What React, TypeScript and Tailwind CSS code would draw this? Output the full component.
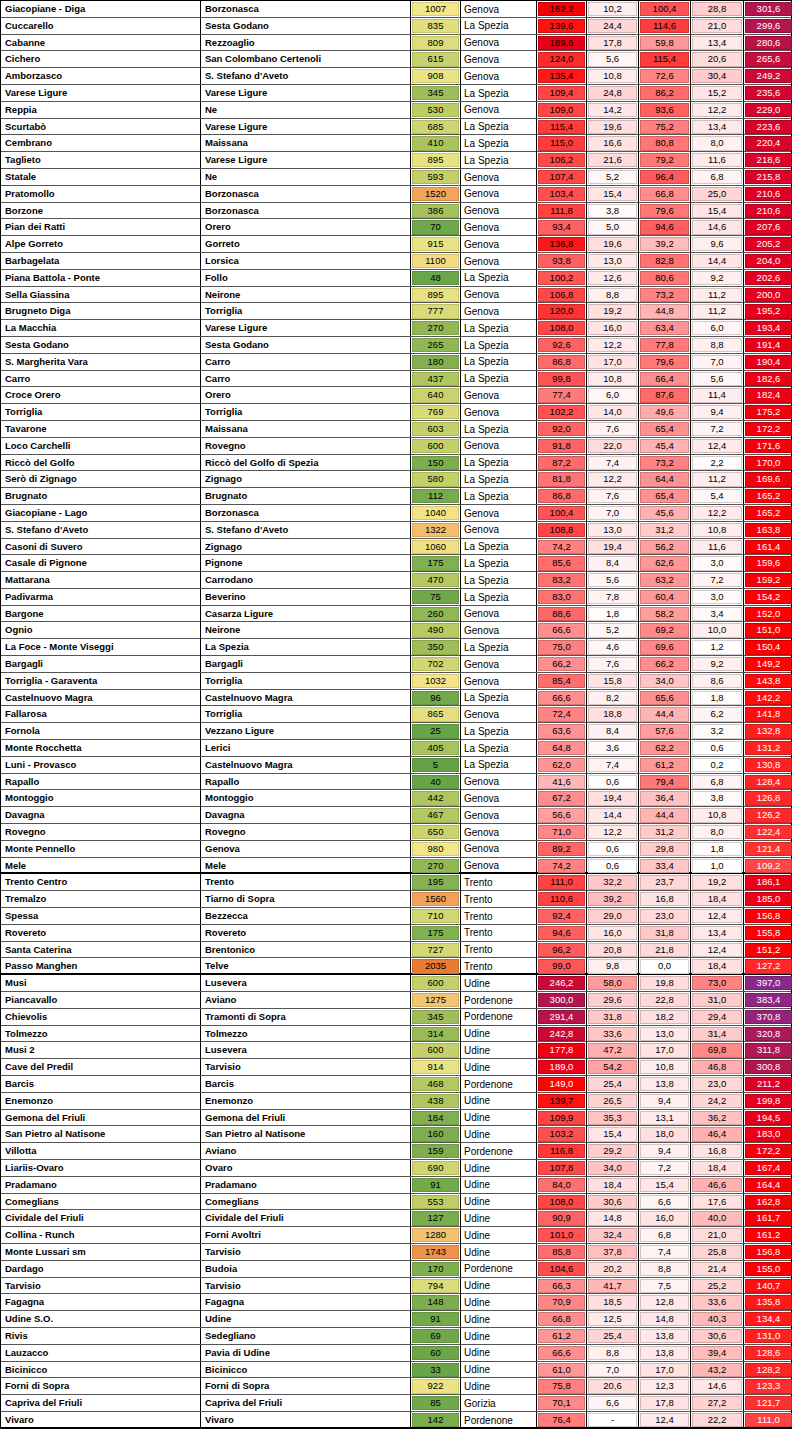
import React from 'react'

type Row = [string, string, number, string, string, string, string, string, string]

// stazione, comune, quota, provincia, 4 giorni di pioggia, totale
const liguria: Row[] = [
  ['Giacopiane - Diga', 'Borzonasca', 1007, 'Genova', '162,2', '10,2', '100,4', '28,8', '301,6'],
  ['Cuccarello', 'Sesta Godano', 835, 'La Spezia', '139,6', '24,4', '114,6', '21,0', '299,6'],
  ['Cabanne', 'Rezzoaglio', 809, 'Genova', '189,6', '17,8', '59,8', '13,4', '280,6'],
  ['Cichero', 'San Colombano Certenoli', 615, 'Genova', '124,0', '5,6', '115,4', '20,6', '265,6'],
  ['Amborzasco', "S. Stefano d'Aveto", 908, 'Genova', '135,4', '10,8', '72,6', '30,4', '249,2'],
  ['Varese Ligure', 'Varese Ligure', 345, 'La Spezia', '109,4', '24,8', '86,2', '15,2', '235,6'],
  ['Reppia', 'Ne', 530, 'Genova', '109,0', '14,2', '93,6', '12,2', '229,0'],
  ['Scurtabò', 'Varese Ligure', 685, 'La Spezia', '115,4', '19,6', '75,2', '13,4', '223,6'],
  ['Cembrano', 'Maissana', 410, 'La Spezia', '115,0', '16,6', '80,8', '8,0', '220,4'],
  ['Taglieto', 'Varese Ligure', 895, 'La Spezia', '106,2', '21,6', '79,2', '11,6', '218,6'],
  ['Statale', 'Ne', 593, 'Genova', '107,4', '5,2', '96,4', '6,8', '215,8'],
  ['Pratomollo', 'Borzonasca', 1520, 'Genova', '103,4', '15,4', '66,8', '25,0', '210,6'],
  ['Borzone', 'Borzonasca', 386, 'Genova', '111,8', '3,8', '79,6', '15,4', '210,6'],
  ['Pian dei Ratti', 'Orero', 70, 'Genova', '93,4', '5,0', '94,6', '14,6', '207,6'],
  ['Alpe Gorreto', 'Gorreto', 915, 'Genova', '136,8', '19,6', '39,2', '9,6', '205,2'],
  ['Barbagelata', 'Lorsica', 1100, 'Genova', '93,8', '13,0', '82,8', '14,4', '204,0'],
  ['Piana Battola - Ponte', 'Follo', 48, 'La Spezia', '100,2', '12,6', '80,6', '9,2', '202,6'],
  ['Sella Giassina', 'Neirone', 895, 'Genova', '106,8', '8,8', '73,2', '11,2', '200,0'],
  ['Brugneto Diga', 'Torriglia', 777, 'Genova', '120,0', '19,2', '44,8', '11,2', '195,2'],
  ['La Macchia', 'Varese Ligure', 270, 'La Spezia', '108,0', '16,0', '63,4', '6,0', '193,4'],
  ['Sesta Godano', 'Sesta Godano', 265, 'La Spezia', '92,6', '12,2', '77,8', '8,8', '191,4'],
  ['S. Margherita Vara', 'Carro', 180, 'La Spezia', '86,8', '17,0', '79,6', '7,0', '190,4'],
  ['Carro', 'Carro', 437, 'La Spezia', '99,8', '10,8', '66,4', '5,6', '182,6'],
  ['Croce Orero', 'Orero', 640, 'Genova', '77,4', '6,0', '87,6', '11,4', '182,4'],
  ['Torriglia', 'Torriglia', 769, 'Genova', '102,2', '14,0', '49,6', '9,4', '175,2'],
  ['Tavarone', 'Maissana', 603, 'La Spezia', '92,0', '7,6', '65,4', '7,2', '172,2'],
  ['Loco Carchelli', 'Rovegno', 600, 'Genova', '91,8', '22,0', '45,4', '12,4', '171,6'],
  ['Riccò del Golfo', 'Riccò del Golfo di Spezia', 150, 'La Spezia', '87,2', '7,4', '73,2', '2,2', '170,0'],
  ['Serò di Zignago', 'Zignago', 580, 'La Spezia', '81,8', '12,2', '64,4', '11,2', '169,6'],
  ['Brugnato', 'Brugnato', 112, 'La Spezia', '86,8', '7,6', '65,4', '5,4', '165,2'],
  ['Giacopiane - Lago', 'Borzonasca', 1040, 'Genova', '100,4', '7,0', '45,6', '12,2', '165,2'],
  ["S. Stefano d'Aveto", "S. Stefano d'Aveto", 1322, 'Genova', '108,8', '13,0', '31,2', '10,8', '163,8'],
  ['Casoni di Suvero', 'Zignago', 1060, 'La Spezia', '74,2', '19,4', '56,2', '11,6', '161,4'],
  ['Casale di Pignone', 'Pignone', 175, 'La Spezia', '85,6', '8,4', '62,6', '3,0', '159,6'],
  ['Mattarana', 'Carrodano', 470, 'La Spezia', '83,2', '5,6', '63,2', '7,2', '159,2'],
  ['Padivarma', 'Beverino', 75, 'La Spezia', '83,0', '7,8', '60,4', '3,0', '154,2'],
  ['Bargone', 'Casarza Ligure', 260, 'Genova', '88,6', '1,8', '58,2', '3,4', '152,0'],
  ['Ognio', 'Neirone', 490, 'Genova', '66,6', '5,2', '69,2', '10,0', '151,0'],
  ['La Foce - Monte Viseggi', 'La Spezia', 350, 'La Spezia', '75,0', '4,6', '69,6', '1,2', '150,4'],
  ['Bargagli', 'Bargagli', 702, 'Genova', '66,2', '7,6', '66,2', '9,2', '149,2'],
  ['Torriglia - Garaventa', 'Torriglia', 1032, 'Genova', '85,4', '15,8', '34,0', '8,6', '143,8'],
  ['Castelnuovo Magra', 'Castelnuovo Magra', 96, 'La Spezia', '66,6', '8,2', '65,6', '1,8', '142,2'],
  ['Fallarosa', 'Torriglia', 865, 'Genova', '72,4', '18,8', '44,4', '6,2', '141,8'],
  ['Fornola', 'Vezzano Ligure', 25, 'La Spezia', '63,6', '8,4', '57,6', '3,2', '132,8'],
  ['Monte Rocchetta', 'Lerici', 405, 'La Spezia', '64,8', '3,6', '62,2', '0,6', '131,2'],
  ['Luni - Provasco', 'Castelnuovo Magra', 5, 'La Spezia', '62,0', '7,4', '61,2', '0,2', '130,8'],
  ['Rapallo', 'Rapallo', 40, 'Genova', '41,6', '0,6', '79,4', '6,8', '128,4'],
  ['Montoggio', 'Montoggio', 442, 'Genova', '67,2', '19,4', '36,4', '3,8', '126,8'],
  ['Davagna', 'Davagna', 467, 'Genova', '56,6', '14,4', '44,4', '10,8', '126,2'],
  ['Rovegno', 'Rovegno', 650, 'Genova', '71,0', '12,2', '31,2', '8,0', '122,4'],
  ['Monte Pennello', 'Genova', 980, 'Genova', '89,2', '0,6', '29,8', '1,8', '121,4'],
  ['Mele', 'Mele', 270, 'Genova', '74,2', '0,6', '33,4', '1,0', '109,2'],
]

const trentino: Row[] = [
  ['Trento Centro', 'Trento', 195, 'Trento', '111,0', '32,2', '23,7', '19,2', '186,1'],
  ['Tremalzo', 'Tiarno di Sopra', 1560, 'Trento', '110,6', '39,2', '16,8', '18,4', '185,0'],
  ['Spessa', 'Bezzecca', 710, 'Trento', '92,4', '29,0', '23,0', '12,4', '156,8'],
  ['Rovereto', 'Rovereto', 175, 'Trento', '94,6', '16,0', '31,8', '13,4', '155,8'],
  ['Santa Caterina', 'Brentonico', 727, 'Trento', '96,2', '20,8', '21,8', '12,4', '151,2'],
  ['Passo Manghen', 'Telve', 2035, 'Trento', '99,0', '9,8', '0,0', '18,4', '127,2'],
]

const friuli: Row[] = [
  ['Musi', 'Lusevera', 600, 'Udine', '246,2', '58,0', '19,8', '73,0', '397,0'],
  ['Piancavallo', 'Aviano', 1275, 'Pordenone', '300,0', '29,6', '22,8', '31,0', '383,4'],
  ['Chievolis', 'Tramonti di Sopra', 345, 'Pordenone', '291,4', '31,8', '18,2', '29,4', '370,8'],
  ['Tolmezzo', 'Tolmezzo', 314, 'Udine', '242,8', '33,6', '13,0', '31,4', '320,8'],
  ['Musi 2', 'Lusevera', 600, 'Udine', '177,8', '47,2', '17,0', '69,8', '311,8'],
  ['Cave del Predil', 'Tarvisio', 914, 'Udine', '189,0', '54,2', '10,8', '46,8', '300,8'],
  ['Barcis', 'Barcis', 468, 'Pordenone', '149,0', '25,4', '13,8', '23,0', '211,2'],
  ['Enemonzo', 'Enemonzo', 438, 'Udine', '139,7', '26,5', '9,4', '24,2', '199,8'],
  ['Gemona del Friuli', 'Gemona del Friuli', 184, 'Udine', '109,9', '35,3', '13,1', '36,2', '194,5'],
  ['San Pietro al Natisone', 'San Pietro al Natisone', 160, 'Udine', '103,2', '15,4', '18,0', '46,4', '183,0'],
  ['Villotta', 'Aviano', 159, 'Pordenone', '116,8', '29,2', '9,4', '16,8', '172,2'],
  ['Liariis-Ovaro', 'Ovaro', 690, 'Udine', '107,8', '34,0', '7,2', '18,4', '167,4'],
  ['Pradamano', 'Pradamano', 91, 'Udine', '84,0', '18,4', '15,4', '46,6', '164,4'],
  ['Comeglians', 'Comeglians', 553, 'Udine', '108,0', '30,6', '6,6', '17,6', '162,8'],
  ['Cividale del Friuli', 'Cividale del Friuli', 127, 'Udine', '90,9', '14,8', '16,0', '40,0', '161,7'],
  ['Collina - Runch', 'Forni Avoltri', 1280, 'Udine', '101,0', '32,4', '6,8', '21,0', '161,2'],
  ['Monte Lussari sm', 'Tarvisio', 1743, 'Udine', '85,8', '37,8', '7,4', '25,8', '156,8'],
  ['Dardago', 'Budoia', 170, 'Pordenone', '104,6', '20,2', '8,8', '21,4', '155,0'],
  ['Tarvisio', 'Tarvisio', 794, 'Udine', '66,3', '41,7', '7,5', '25,2', '140,7'],
  ['Fagagna', 'Fagagna', 148, 'Udine', '70,9', '18,5', '12,8', '33,6', '135,8'],
  ['Udine S.O.', 'Udine', 91, 'Udine', '66,8', '12,5', '14,8', '40,3', '134,4'],
  ['Rivis', 'Sedegliano', 69, 'Udine', '61,2', '25,4', '13,8', '30,6', '131,0'],
  ['Lauzacco', 'Pavia di Udine', 60, 'Udine', '66,6', '8,8', '13,8', '39,4', '128,6'],
  ['Bicinicco', 'Bicinicco', 33, 'Udine', '61,0', '7,0', '17,0', '43,2', '128,2'],
  ['Forni di Sopra', 'Forni di Sopra', 922, 'Udine', '75,8', '20,6', '12,3', '14,6', '123,3'],
  ['Capriva del Friuli', 'Capriva del Friuli', 85, 'Gorizia', '70,1', '6,6', '17,8', '27,2', '121,7'],
  ['Vivaro', 'Vivaro', 142, 'Pordenone', '76,4', '-', '12,4', '22,2', '111,0'],
]

type Stop = [number, number, number, number]

const rainStops: Stop[] = [
  [0, 255, 255, 255],
  [150, 255, 0, 0],
  [210, 222, 0, 36],
  [300, 178, 22, 78],
  [400, 136, 42, 140],
]

const quotaStops: Stop[] = [
  [0, 99, 161, 70],
  [500, 184, 203, 98],
  [1000, 244, 232, 138],
  [1500, 242, 166, 92],
  [2035, 232, 123, 53],
]

function scale(stops: Stop[], v: number) {
  if (v <= stops[0][0]) return `rgb(${stops[0][1]},${stops[0][2]},${stops[0][3]})`
  for (let i = 1; i < stops.length; i++) {
    const a = stops[i - 1]
    const b = stops[i]
    if (v <= b[0]) {
      const t = (v - a[0]) / (b[0] - a[0])
      const c = [1, 2, 3].map((k) => Math.round(a[k] + (b[k] - a[k]) * t))
      return `rgb(${c[0]},${c[1]},${c[2]})`
    }
  }
  const l = stops[stops.length - 1]
  return `rgb(${l[1]},${l[2]},${l[3]})`
}

const num = (s: string) => (s === '-' ? 0 : parseFloat(s.replace(',', '.')))

function TableRow({ row, last, friul }: { row: Row; last: boolean; friul: boolean }) {
  const [stazione, comune, quota, prov, a, b, c, d, tot] = row
  const rain = [a, b, c, d]
  return (
    <div
      className={`grid h-[16.8px] grid-cols-[200px_210px_50px_76px_50px_52px_52px_53px_49px] ${
        last ? 'border-b-2 border-black' : 'border-b border-[#555]'
      }`}
    >
      <div className="flex items-center border-r border-black pl-[4px] text-[9.5px] font-bold">{stazione}</div>
      <div className="flex items-center border-r border-black pl-[4px] text-[9.5px] font-bold">{comune}</div>
      <div className="border-r border-black p-px">
        <div
          className="flex h-full items-center justify-center text-[9.5px] shadow-[inset_0_0_0_1px_rgba(0,0,0,0.12)]"
          style={{ backgroundColor: scale(quotaStops, quota) }}
        >
          {quota}
        </div>
      </div>
      <div className="flex items-center border-r border-black pl-[3px] text-[10px]">{prov}</div>
      {rain.map((v, i) => (
        <div key={i} className="border-r border-black p-px">
          <div
            className={`flex h-full items-center justify-center text-[9.5px] shadow-[inset_0_0_0_1px_rgba(0,0,0,0.18)] ${
              i === 0 && friul && num(v) >= 145 ? 'text-white' : 'text-black'
            }`}
            style={{ backgroundColor: scale(rainStops, num(v)) }}
          >
            {v}
          </div>
        </div>
      ))}
      <div className="p-px">
        <div
          className="flex h-full items-center justify-center text-[9.5px] text-white shadow-[inset_0_0_0_1px_rgba(0,0,0,0.18)]"
          style={{ backgroundColor: scale(rainStops, num(tot)) }}
        >
          {tot}
        </div>
      </div>
    </div>
  )
}

export default function App() {
  const sections = [
    { rows: liguria, friul: false },
    { rows: trentino, friul: false },
    { rows: friuli, friul: true },
  ]
  return (
    <div className="min-h-[1430px] w-[792px] bg-white font-['Liberation_Sans',Arial,sans-serif] text-black">
      <div className="border-t border-r border-l border-black">
        {sections.map((s, si) =>
          s.rows.map((r, ri) => (
            <TableRow key={`${si}-${ri}`} row={r} friul={s.friul} last={ri === s.rows.length - 1} />
          ))
        )}
      </div>
    </div>
  )
}
